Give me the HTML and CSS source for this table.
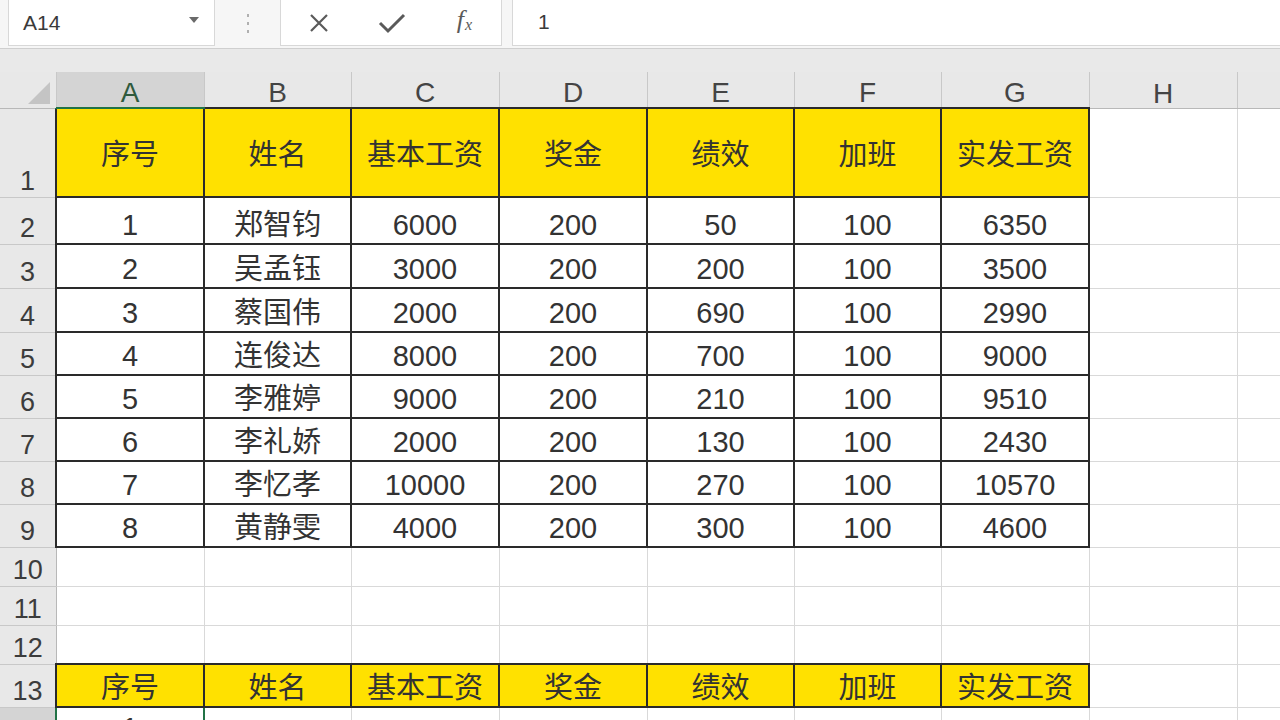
FILE: index.html
```html
<!DOCTYPE html>
<html lang="zh-CN">
<head>
<meta charset="utf-8">
<title>Sheet</title>
<link rel="stylesheet" href="styles.css">
</head>
<body>
<div class="app">
  <div class="fbar">
    <div class="namebox"><span class="ref">A14</span>
      <svg class="caret" width="12" height="8" viewBox="0 0 12 8"><path d="M1 1 L11 1 L6 7 Z" fill="#6a6a6a"/></svg>
    </div>
    <div class="dots"><i></i><i></i><i></i></div>
    <div class="btns">
      <div class="btn"><svg width="22" height="22" viewBox="0 0 22 22"><path d="M3 3 L19 19 M19 3 L3 19" stroke="#5a5a5a" stroke-width="2.2" fill="none"/></svg></div>
      <div class="btn"><svg width="28" height="22" viewBox="0 0 28 22"><path d="M2 11 L10 19 L26 3" stroke="#5a5a5a" stroke-width="3" fill="none" stroke-linejoin="miter"/></svg></div>
      <div class="btn"><span class="fx"><i>f</i><span class="fxs">x</span></span></div>
    </div>
    <div class="finput">1</div>
  </div>
  <div class="sheet">
    <table class="grid">
      <colgroup>
        <col class="w-rh"><col class="w148"><col class="w147"><col class="w148"><col class="w148"><col class="w147"><col class="w147"><col class="w148"><col class="w148"><col class="w-rest">
      </colgroup>
      <thead>
        <tr class="colhdr">
          <th class="corner"><span class="tri"></span></th>
          <th class="chsel">A</th><th>B</th><th>C</th><th>D</th><th>E</th><th>F</th><th>G</th><th>H</th><th></th>
        </tr>
      </thead>
      <tbody>
        <tr class="r1">
          <td class="rh">1</td>
          <td class="t y hd">序号</td><td class="t y hd">姓名</td><td class="t y hd">基本工资</td><td class="t y hd">奖金</td><td class="t y hd">绩效</td><td class="t y hd">加班</td><td class="t y hd">实发工资</td><td></td><td></td>
        </tr>
        <tr class="r47">
          <td class="rh">2</td>
          <td class="t">1</td><td class="t">郑智钧</td><td class="t">6000</td><td class="t">200</td><td class="t">50</td><td class="t">100</td><td class="t">6350</td><td></td><td></td>
        </tr>
        <tr class="r44">
          <td class="rh">3</td>
          <td class="t">2</td><td class="t">吴孟钰</td><td class="t">3000</td><td class="t">200</td><td class="t">200</td><td class="t">100</td><td class="t">3500</td><td></td><td></td>
        </tr>
        <tr class="r44">
          <td class="rh">4</td>
          <td class="t">3</td><td class="t">蔡国伟</td><td class="t">2000</td><td class="t">200</td><td class="t">690</td><td class="t">100</td><td class="t">2990</td><td></td><td></td>
        </tr>
        <tr class="r43">
          <td class="rh">5</td>
          <td class="t">4</td><td class="t">连俊达</td><td class="t">8000</td><td class="t">200</td><td class="t">700</td><td class="t">100</td><td class="t">9000</td><td></td><td></td>
        </tr>
        <tr class="r43">
          <td class="rh">6</td>
          <td class="t">5</td><td class="t">李雅婷</td><td class="t">9000</td><td class="t">200</td><td class="t">210</td><td class="t">100</td><td class="t">9510</td><td></td><td></td>
        </tr>
        <tr class="r43">
          <td class="rh">7</td>
          <td class="t">6</td><td class="t">李礼娇</td><td class="t">2000</td><td class="t">200</td><td class="t">130</td><td class="t">100</td><td class="t">2430</td><td></td><td></td>
        </tr>
        <tr class="r43">
          <td class="rh">8</td>
          <td class="t">7</td><td class="t">李忆孝</td><td class="t">10000</td><td class="t">200</td><td class="t">270</td><td class="t">100</td><td class="t">10570</td><td></td><td></td>
        </tr>
        <tr class="r43">
          <td class="rh">9</td>
          <td class="t">8</td><td class="t">黄静雯</td><td class="t">4000</td><td class="t">200</td><td class="t">300</td><td class="t">100</td><td class="t">4600</td><td></td><td></td>
        </tr>
        <tr class="r39">
          <td class="rh">10</td><td></td><td></td><td></td><td></td><td></td><td></td><td></td><td></td><td></td>
        </tr>
        <tr class="r39">
          <td class="rh">11</td><td></td><td></td><td></td><td></td><td></td><td></td><td></td><td></td><td></td>
        </tr>
        <tr class="r39">
          <td class="rh">12</td><td></td><td></td><td></td><td></td><td></td><td></td><td></td><td></td><td></td>
        </tr>
        <tr class="r43">
          <td class="rh">13</td>
          <td class="t y">序号</td><td class="t y">姓名</td><td class="t y">基本工资</td><td class="t y">奖金</td><td class="t y">绩效</td><td class="t y">加班</td><td class="t y">实发工资</td><td></td><td></td>
        </tr>
        <tr class="r36">
          <td class="rh rhsel">14</td>
          <td class="sel">1</td><td></td><td></td><td></td><td></td><td></td><td></td><td></td><td></td>
        </tr>
      </tbody>
    </table>
  </div>
</div>
</body>
</html>
```

FILE: styles.css
```css
html, body {
  margin: 0;
  padding: 0;
  width: 1280px;
  height: 720px;
  overflow: hidden;
  background: #ffffff;
}

.app {
  font-family: "Liberation Sans", "Noto Sans CJK SC", sans-serif;
  color: #333333;
}

/* ---------- formula bar ---------- */
.fbar {
  display: flex;
  align-items: flex-start;
  height: 48px;
  background: #f6f6f6;
  border-bottom: 1px solid #cfcfcf;
}

.namebox {
  margin-left: 8px;
  width: 207px;
  height: 46px;
  background: #ffffff;
  border: 1px solid #d8d8d8;
  border-top: none;
  display: flex;
  align-items: center;
  justify-content: space-between;
  padding: 0 14px 0 14px;
  box-sizing: border-box;
}

.ref {
  font-size: 21px;
  color: #3a3a3a;
}

.caret {
  margin-top: -6px;
}

.dots {
  width: 65px;
  height: 46px;
  display: flex;
  flex-direction: column;
  align-items: center;
  justify-content: center;
  gap: 5px;
}

.dots i {
  width: 2px;
  height: 3px;
  background: #b0b0b0;
  display: block;
}

.btns {
  width: 222px;
  height: 46px;
  background: #ffffff;
  border: 1px solid #d8d8d8;
  border-top: none;
  box-sizing: border-box;
  display: flex;
  align-items: center;
  padding-left: 1px;
}

.btn {
  width: 73px;
  height: 44px;
  display: flex;
  align-items: center;
  justify-content: center;
}

.fx {
  font-family: "Liberation Serif", serif;
  color: #5a5a5a;
  font-size: 26px;
  line-height: 30px;
  margin-top: -2px;
}

.fx i {
  font-style: italic;
}

.fxs {
  font-size: 16px;
  font-style: italic;
  position: relative;
  top: 2px;
  margin-left: 1px;
}

.finput {
  margin-left: 10px;
  flex: 1;
  height: 46px;
  background: #ffffff;
  border-left: 1px solid #d8d8d8;
  border-bottom: 1px solid #d8d8d8;
  box-sizing: border-box;
  padding-left: 25px;
  font-size: 21px;
  line-height: 44px;
  color: #3a3a3a;
}

/* ---------- sheet ---------- */
.sheet {
  background: #e9e9e9;
  padding-top: 23px;
}

.grid {
  table-layout: fixed;
  border-collapse: collapse;
  width: 1280px;
  background: #ffffff;
}

.w-rh { width: 56px; }
.w148 { width: 148px; }
.w147 { width: 147px; }
.w-rest { width: 43px; }

.grid td,
.grid th {
  padding: 0;
  border: 1px solid #d9d9d9;
  text-align: center;
  vertical-align: bottom;
  font-weight: normal;
  font-size: 29px;
  line-height: 35px;
  color: #333333;
  overflow: hidden;
  white-space: nowrap;
}

.colhdr {
  height: 36px;
}

.colhdr th {
  background: #e8e8e8;
  border-top: none;
  border-left: none;
  border-right: 1px solid #c8c8c8;
  border-bottom: 1px solid #b8b8b8;
  font-size: 28px;
  line-height: 29px;
  color: #444444;
}

.colhdr th.chsel {
  background: #d4d4d4;
  color: #2f5a3d;
  border-bottom: 2px solid #217346;
}

.corner {
  position: relative;
}

.tri {
  position: absolute;
  right: 6px;
  bottom: 4px;
  width: 0;
  height: 0;
  border-left: 22px solid transparent;
  border-bottom: 22px solid #c4c4c4;
}

.grid td.rh {
  background: #e8e8e8;
  border-left: none;
  border-top: 1px solid #c8c8c8;
  border-bottom: 1px solid #c8c8c8;
  border-right: 1px solid #b8b8b8;
  font-size: 27px;
  line-height: 32px;
  color: #3c3c3c;
}

.grid td.rhsel {
  background: #d4d4d4;
  border-right: 2px solid #217346;
}

.r1 { height: 89px; }
.r47 { height: 47px; }
.r44 { height: 44px; }
.r43 { height: 43px; }
.r39 { height: 39px; }
.r36 { height: 36px; }

.grid td.t {
  border: 2px solid #2a2a2a;
}

.grid td.y {
  background: #ffe100;
}

.grid td.hd {
  vertical-align: middle;
  padding-top: 6px;
}

.grid td.sel {
  border: 2px solid #217346;
  vertical-align: top;
  line-height: 40px;
}
```
